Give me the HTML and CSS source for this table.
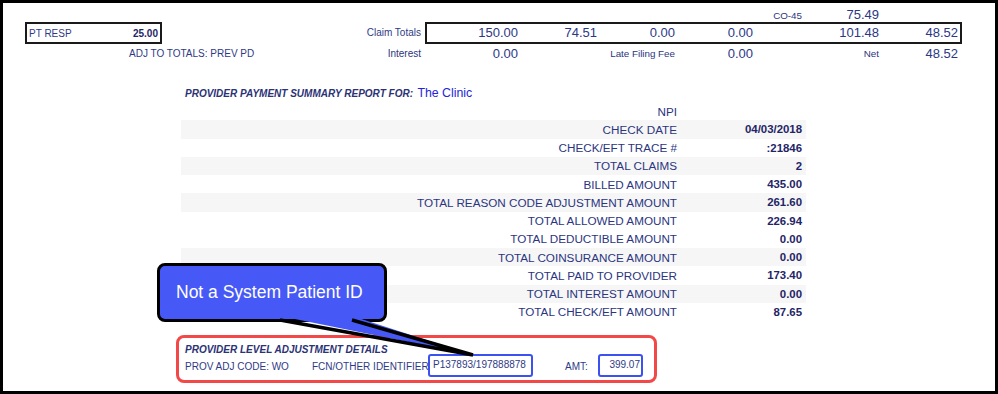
FILE: index.html
```html
<!DOCTYPE html>
<html>
<head>
<meta charset="utf-8">
<link rel="stylesheet" href="styles.css">
</head>
<body>
<div class="frame">
  <div class="top">
    <div class="row-a cols">
      <div class="lead"></div>
      <div class="c"></div><div class="c"></div><div class="c"></div><div class="c"></div>
      <div class="c lbl">CO-45</div>
      <div class="c num">75.49</div>
      <div class="c"></div>
    </div>
    <div class="row-b">
      <div class="ptbox"><span>PT RESP</span><b>25.00</b></div>
      <div class="claim-lbl">Claim Totals</div>
      <div class="totbox">
        <div class="c num">150.00</div>
        <div class="c num">74.51</div>
        <div class="c num">0.00</div>
        <div class="c num">0.00</div>
        <div class="c"></div>
        <div class="c num">101.48</div>
        <div class="c num last">48.52</div>
      </div>
    </div>
    <div class="row-c cols">
      <div class="lead"><span class="adj">ADJ TO TOTALS: PREV PD</span><span class="lbl">Interest</span></div>
      <div class="c num">0.00</div>
      <div class="c"></div>
      <div class="c lbl">Late Filing Fee</div>
      <div class="c num">0.00</div>
      <div class="c"></div>
      <div class="c lbl">Net</div>
      <div class="c num">48.52</div>
    </div>
  </div>

  <div class="report">
    <div class="rep-head"><span class="hd">PROVIDER PAYMENT SUMMARY REPORT FOR:</span> <span class="clinic">The Clinic</span></div>
    <div class="sum">
      <div class="r"><span class="k">NPI</span><span class="v"></span></div>
      <div class="r s"><span class="k">CHECK DATE</span><span class="v">04/03/2018</span></div>
      <div class="r"><span class="k">CHECK/EFT TRACE #</span><span class="v">:21846</span></div>
      <div class="r s"><span class="k">TOTAL CLAIMS</span><span class="v">2</span></div>
      <div class="r"><span class="k">BILLED AMOUNT</span><span class="v">435.00</span></div>
      <div class="r s"><span class="k">TOTAL REASON CODE ADJUSTMENT AMOUNT</span><span class="v">261.60</span></div>
      <div class="r"><span class="k">TOTAL ALLOWED AMOUNT</span><span class="v">226.94</span></div>
      <div class="r"><span class="k">TOTAL DEDUCTIBLE AMOUNT</span><span class="v">0.00</span></div>
      <div class="r s"><span class="k">TOTAL COINSURANCE AMOUNT</span><span class="v">0.00</span></div>
      <div class="r"><span class="k">TOTAL PAID TO PROVIDER</span><span class="v">173.40</span></div>
      <div class="r s"><span class="k">TOTAL INTEREST AMOUNT</span><span class="v">0.00</span></div>
      <div class="r"><span class="k">TOTAL CHECK/EFT AMOUNT</span><span class="v">87.65</span></div>
    </div>
    <div class="adjbox">
      <div class="hd">PROVIDER LEVEL ADJUSTMENT DETAILS</div>
      <div class="adjline">
        <span class="code">PROV ADJ CODE: WO</span>
        <span class="fcn">FCN/OTHER IDENTIFIER</span>
        <span class="hl hl1">P137893/197888878</span>
        <span class="amt">AMT:</span>
        <span class="hl hl2">399.07</span>
      </div>
    </div>
  </div>

  <div class="bubble">Not a System Patient ID</div>
  <svg class="tail" width="215" height="52" viewBox="0 0 215 52">
    <polygon points="10,6 82,6 203,45" fill="#4659f6"/>
    <polyline points="10,10 203,45 82,10" fill="none" stroke="#000" stroke-width="3.4" stroke-linejoin="miter"/>
  </svg>
</div>
</body>
</html>
```

FILE: styles.css
```css
* { box-sizing: border-box; }
body { margin: 0; background: #fff; }
.frame {
  position: relative;
  width: 998px;
  height: 394px;
  border: 3px solid #000;
  background: #fff;
  font-family: "Liberation Sans", Arial, sans-serif;
  color: #2f3a86;
  overflow: hidden;
}
.top { padding: 4px 0 0 22px; }
.cols {
  display: grid;
  grid-template-columns: 400px 97px 79px 78px 78px 49px 77px 79px;
}
.c { text-align: right; padding-right: 4px; white-space: nowrap; }
.num { font-size: 13px; color: #2c3785; }
.lbl { font-size: 9.8px; color: #2b3580; }
.row-a { height: 15px; align-items: baseline; line-height: 15px; }
.row-b {
  display: grid;
  grid-template-columns: 137px 263px 537px;
  height: 22px;
}
.ptbox {
  border: 2px solid #1a1a1a;
  display: flex;
  justify-content: space-between;
  align-items: center;
  padding: 0 2px 0 2px;
  font-size: 10px;
}
.ptbox b { color: #1f2566; }
.claim-lbl {
  font-size: 10px;
  text-align: right;
  padding-right: 4px;
  line-height: 22px;
}
.totbox {
  border: 2px solid #1a1a1a;
  display: grid;
  grid-template-columns: 95px 79px 78px 78px 49px 77px 77px;
  align-items: center;
  line-height: 18px;
}
.totbox .last { padding-right: 2px; }
.row-c { height: 20px; align-items: center; line-height: 20px; }
.row-c .lead { display: flex; justify-content: space-between; align-items: center; padding-right: 4px; }
.adj { font-size: 10px; margin-left: 104px; }
.row-c .lead .lbl { font-size: 10px; }

.report { margin: 21px 0 0 178px; width: 625px; }
.rep-head { padding-left: 4px; height: 14px; line-height: 14px; white-space: nowrap; }
.hd { font-size: 10px; font-weight: bold; font-style: italic; color: #2b3275; }
.clinic { font-size: 12.3px; color: #2424d8; }
.sum { margin-top: 3px; }
.r {
  display: grid;
  grid-template-columns: 496px 129px;
  height: 18.25px;
  align-items: center;
  font-size: 11.7px;
}
.r.s { background: #f6f6f6; }
.k { text-align: right; color: #2b3580; }
.v { text-align: right; padding-right: 4px; font-weight: bold; color: #1f2566; font-size: 11.4px; }

.adjbox {
  margin: 14px 0 0 -5px;
  width: 481px;
  height: 48px;
  border: 3px solid #f24848;
  border-radius: 8px;
  padding: 6px 0 0 6px;
}
.adjbox .hd { display: block; line-height: 12px; }
.adjline {
  display: flex;
  align-items: center;
  height: 16px;
  font-size: 10px;
  white-space: nowrap;
  margin-top: 2px;
}
.code { width: 127px; }
.fcn { width: 116px; }
.hl {
  border: 2.5px solid #3b52f0;
  border-radius: 3px;
  height: 23px;
  line-height: 18px;
  margin-top: -4px;
  margin-bottom: -3px;
}
.hl1 { width: 105px; padding-left: 3px; }
.amt { margin-left: 32px; width: 33px; }
.hl2 { width: 45px; text-align: right; padding-right: 1px; }

.bubble {
  position: absolute;
  left: 154px;
  top: 260px;
  width: 230px;
  height: 59px;
  border: 3px solid #000;
  border-radius: 8px;
  background: #4659f6;
  color: #fff;
  font-size: 17.5px;
  display: flex;
  align-items: center;
  padding-left: 16px;
}
.tail {
  position: absolute;
  left: 267px;
  top: 307px;
}
```
